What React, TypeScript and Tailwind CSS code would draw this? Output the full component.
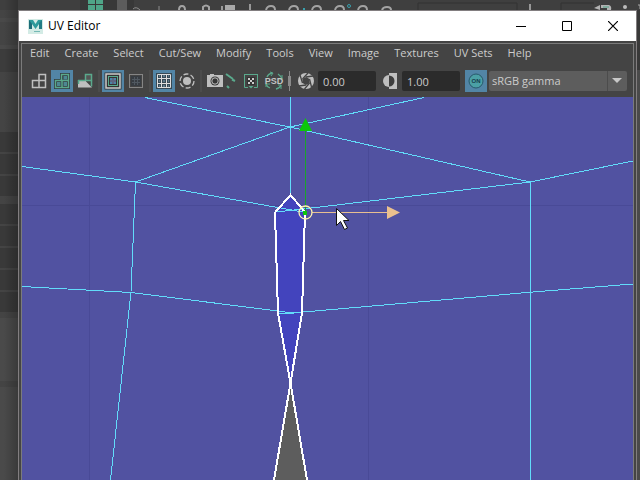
import React from "react";

const MENUS = ["Edit", "Create", "Select", "Cut/Sew", "Modify", "Tools", "View", "Image", "Textures", "UV Sets", "Help"];

const GREEN = "#5aa98c";
const GREY = "#bfbfbf";

function Tool({ label, active = false, wide = false, children }: { label: string; active?: boolean; wide?: boolean; children: React.ReactNode }) {
  return (
    <button
      type="button"
      aria-label={label}
      aria-pressed={active}
      className={`flex h-[22px] shrink-0 items-center justify-center ${wide ? "w-[35px]" : "w-[22px]"} ${active ? "bg-[#5285a6]" : ""}`}
    >
      <svg width={wide ? 35 : 22} height="22" viewBox={wide ? "0 0 35 22" : "0 0 22 22"} fill="none">
        {children}
      </svg>
    </button>
  );
}

function Separator() {
  return <span className="mx-px h-[22px] w-[2px] shrink-0 bg-[#4c4c4c]" />;
}

function MayaLogo() {
  return (
    <svg width="15" height="15" viewBox="0 0 15 15" className="shrink-0">
      <rect width="15" height="15" fill="#d3ebe5" />
      <path d="M1 1h4l2.500 4L10 1h4v9h-3V5L7.500 10 4 5v5H1z" fill="#2d9a9b" />
      <path d="M1 1l3 4v5H1z" fill="#1c6c78" />
      <path d="M11 4l3-3v9h-3z" fill="#237c86" />
      <path d="M6 12.500h6" stroke="#75b9b5" />
    </svg>
  );
}

function Backdrop() {
  return (
    <div className="absolute inset-0">
      <svg className="h-full w-full" viewBox="0 0 640 480" preserveAspectRatio="xMinYMin slice">
        <defs>
          <linearGradient id="edge" x1="0" x2="1">
            <stop offset="0" stopColor="#000" stopOpacity="0" />
            <stop offset="1" stopColor="#000" stopOpacity=".22" />
          </linearGradient>
        </defs>
        <rect width="640" height="480" fill="#444" />
        <rect y="0" width="640" height="10" fill="#3f3f3f" />
        <rect y="18" width="18" height="4" fill="#494949" />
        <rect y="45" width="18" height="4" fill="#494949" />
        <rect y="49" width="18" height="23" fill="#3c3c3c" />
        <rect y="132" width="18" height="64" fill="#393939" />
        <rect y="204" width="18" height="108" fill="#393939" />
        <path d="M0 153h18M0 175h18M0 225h18M0 247h18M0 269h18M0 291h18" stroke="#444" strokeWidth="2" />
        <rect y="318" width="18" height="63" fill="#4a4a4a" />
        <rect y="387" width="18" height="93" fill="#4a4a4a" />
        <rect x="4" width="14" height="480" fill="url(#edge)" />
        <rect x="637" y="10" width="3" height="60" fill="#393939" />
        <rect x="637" y="70" width="3" height="410" fill="#4a4a4a" />
        <rect x="80" width="54" height="10" fill="#383838" />
        <path d="M88 0h7v4h-7zM96 0h7v4h-7zM88 5h7v5h-7zM96 5h7v5h-7z" fill="#4fa588" />
        <rect x="117" width="10" height="10" fill="#5c5c5c" />
        <path d="M133 9q3-3 7 1M159 6v4" stroke="#8d8d8d" fill="none" />
        <path d="M179 10q0-4 3-4t3 4M203 10V7q3-3 6 0v3M266 10q1-4 5-4t4 4M289 10q1-4 5-4t4 4M312 10q1-4 5-4t4 4M335 10q1-4 5-4t4 4M358 10q1-4 5-4t4 4M382 10q1-3 5-3t4 3" stroke="#a3a3a3" strokeWidth="2" fill="none" />
        <path d="M225 5h10v5h-10z" fill="#a9a9a9" />
        <path d="M221 7h2M221 9h2M250 4v6M530 4v6" stroke="#999" strokeWidth="2" />
        <circle cx="349" cy="6" r="1.500" stroke="#38a0ad" fill="none" />
        <path d="M303 8h2v2h-2z" fill="#38a0ad" />
        <path d="M418 10V3h99v7M561 10V3h33" stroke="#333" fill="none" />
        <path d="M594 8l6-3v5zM601 5h8q3 1 2 5h-4V8h-6z" fill="#b3b3b3" />
        <path d="M603 7h6" stroke="#4fa588" />
        <circle cx="625" cy="7" r="2" fill="#bbb" />
        <path d="M638 5h2v4" stroke="#aaa" fill="none" />
      </svg>
    </div>
  );
}

function TitleBar() {
  return (
    <header className="flex h-[30px] shrink-0 items-center bg-white pl-[9px] text-black">
      <MayaLogo />
      <h1 className="ml-[5px] flex-1 text-[12px] leading-4">UV Editor</h1>
      <button type="button" aria-label="Minimize" className="flex h-[30px] w-[46px] items-center justify-center">
        <svg width="10" height="10" viewBox="0 0 10 10" stroke="#000" shapeRendering="crispEdges"><path d="M0 5.500h10" /></svg>
      </button>
      <button type="button" aria-label="Maximize" className="flex h-[30px] w-[46px] items-center justify-center">
        <svg width="10" height="10" viewBox="0 0 10 10" fill="none" stroke="#000"><path d="M.5.5h9v9h-9z" /></svg>
      </button>
      <button type="button" aria-label="Close" className="flex h-[30px] w-[46px] items-center justify-center">
        <svg width="10" height="10" viewBox="0 0 10 10" stroke="#000" strokeWidth="1.200"><path d="M0 0l10 10M10 0L0 10" /></svg>
      </button>
    </header>
  );
}

function Toolbar() {
  return (
    <div className="flex h-[35px] shrink-0 items-center gap-px pb-[2px] pl-[6px] pr-[6px] pt-[5px]">
      <Tool label="UV wireframe">
        <path d="M4.500 10.500h13v7h-13zM11 17.500v-13h6.500v6" stroke={GREY} strokeWidth="1.500" />
      </Tool>
      <Tool label="UV shaded" active>
        <path d="M3 9h6V3h10v16H3z" fill="#333b40" />
        <path d="M4.500 10.500h6v-6h7v13h-13zM10.500 10.500h7M11 10.500v7" stroke={GREEN} strokeWidth="1.500" />
        <path d="M6 12h3.500v4H6zM12.500 12H16v4h-3.500zM12.500 6H16v3.500h-3.500z" fill="#4d8892" />
      </Tool>
      <Tool label="UV distortion">
        <path d="M11.500 4.500h6v6h-6z" fill="#555" stroke={GREEN} strokeWidth="1.500" />
        <path d="M4 10.500h7v7H4z" fill={GREY} />
        <path d="M11 10.500l7 7h-7z" fill={GREY} />
        <path d="M17.500 10.500v6M4 10.500h7M4.500 10v4" stroke={GREEN} strokeWidth="1.500" />
      </Tool>
      <Separator />
      <Tool label="Texture borders" active>
        <rect x="2.500" y="2.500" width="17" height="17" fill="#333" />
        <rect x="4" y="4" width="14" height="14" stroke="#ccc" strokeWidth="1.500" />
        <rect x="6.500" y="6.500" width="9" height="9" stroke={GREEN} />
        <path d="M8 8h2v2H8zM12 8h2v2h-2zM8 12h2v2H8zM12 12h2v2h-2z" fill="#4d82a6" />
        <path d="M10 8h2v6h-2zM8 10h6v2H8z" fill="#5d6480" />
      </Tool>
      <Tool label="Shell borders">
        <rect x="4.500" y="4.500" width="13" height="13" stroke="#858585" />
        <rect x="6" y="6" width="10" height="10" fill="#373c42" />
        <path d="M9.500 7v8M12.500 7v8M7 9.500h8M7 12.500h8" stroke="#505860" />
      </Tool>
      <Separator />
      <Tool label="Grid" active>
        <rect x="3" y="3" width="16" height="16" fill="#374954" />
        <path d="M4.500 4.500h13v13h-13zM8.500 4v14M13.500 4v14M4 8.500h14M4 13.500h14" stroke="#ddd" />
        <path d="M6 6h1M10 6h2M15 6h1M6 11h1M10 11h2M15 11h1M6 16h1M10 16h2M15 16h1" stroke="#81a6ba" />
      </Tool>
      <Tool label="Isolate select">
        <circle cx="11" cy="11" r="4" fill={GREY} />
        <circle cx="11" cy="11" r="7" stroke={GREY} strokeWidth="1.300" strokeDasharray="5 2.300" />
      </Tool>
      <Separator />
      <Tool label="UV snapshot" wide>
        <path d="M3 5h3V4h4v1h9v12H3z" fill={GREY} />
        <circle cx="11" cy="11" r="4.500" fill="#363636" />
        <circle cx="11" cy="11" r="3.200" stroke={GREY} />
        <path d="M22 4l7 5" stroke={GREEN} strokeWidth="2" />
        <path d="M28 9.500l3 1.500M23 16l2 2" stroke={GREEN} strokeWidth="2" />
      </Tool>
      <Tool label="Image display">
        <path d="M8 4.500H4.500v13H8M14 4.500h3.500v13H14" stroke={GREEN} />
        <path d="M4 4.500h14" stroke={GREEN} />
        <path d="M8.500 16h5L11 18.500z" fill={GREEN} />
        <rect x="7" y="7" width="8" height="8" fill="#333" />
        <path d="M8 8h2v2H8zM12 8h2v2h-2zM10 10h2v2h-2zM8 12h2v2H8zM12 12h2v2h-2z" fill="#ccc" />
      </Tool>
      <Tool label="PSD network">
        <path d="M4 7q1-3 5-4M15 4q3 2 4 5M3 14q1 3 4 4M13 19q4-1 5-4" stroke={GREEN} strokeWidth="1.300" />
        <path d="M7 2l3 1-2 3M19 5v4h-4M3 17v-3h4M15 15h3v4" stroke={GREEN} />
        <text x="11" y="14" textAnchor="middle" fill="#c3c3c3" fontSize="9" fontWeight="700" fontFamily="Liberation Sans, sans-serif">PSD</text>
      </Tool>
      <svg width="6" height="22" viewBox="0 0 6 22" className="mr-[2px] shrink-0" stroke="#8a8a8a">
        <path d="M3.500 1v20" /><path d="M3.500 6v10" strokeWidth="3" />
      </svg>
      <Tool label="Exposure">
        <circle cx="11" cy="11" r="8" fill={GREY} />
        <path d="M11 7l3.500 2v4L11 15l-3.500-2V9z" fill="#444" />
        <path d="M11 7l7-1M14.500 9l2 8M14.500 13l-5 6M11 15l-7 1M7.500 13L5 5M7.500 9L13 3" stroke="#444" strokeWidth="1.300" />
      </Tool>
      <input type="text" aria-label="Exposure value" defaultValue="0.00" className="h-5 w-[58px] shrink-0 rounded-[2px] bg-[#2b2b2b] px-[5px] text-[11px] text-[#ccc]" />
      <span className="w-px shrink-0" />
      <Tool label="Gamma">
        <rect x="10" y="3" width="8" height="16" fill={GREY} />
        <path d="M10 5a6 6 0 0 0 0 12z" fill={GREY} />
        <path d="M10 5.500a5.500 5.500 0 0 1 0 11z" fill="#3d3d3d" />
      </Tool>
      <input type="text" aria-label="Gamma value" defaultValue="1.00" className="h-5 w-[58px] shrink-0 rounded-[2px] bg-[#2b2b2b] px-[5px] text-[11px] text-[#ccc]" />
      <span className="w-[3px] shrink-0" />
      <Tool label="Color management" active>
        <circle cx="11" cy="11" r="7" fill="#4ba0a5" stroke="#28586b" />
        <text x="11" y="13" textAnchor="middle" fill="#173e4d" fontSize="6" fontWeight="700" fontFamily="Liberation Sans, sans-serif">ON</text>
      </Tool>
      <div className="relative ml-px h-5 min-w-0 flex-1">
        <select aria-label="View transform" className="block h-full w-full appearance-none rounded-[2px] bg-[#5d5d5d] pl-[3px] text-[11px] text-[#ccc]">
          <option>sRGB gamma</option>
        </select>
        <svg width="20" height="20" viewBox="0 0 20 20" className="pointer-events-none absolute right-0 top-0">
          <path d="M.5 0v20" stroke="#4c4c4c" /><path d="M5 7h10l-5 5z" fill="#c8c8c8" />
        </svg>
      </div>
    </div>
  );
}

function UvCanvas() {
  return (
    <main className="min-h-0 flex-1 bg-[#5152a1]">
      <svg className="block h-full w-full" viewBox="22 97 611 383" preserveAspectRatio="xMidYMid slice" fill="none">
        <g shapeRendering="crispEdges">
          <path d="M89.500 97v383M368.500 97v383M22 205.500h611" stroke="#494a97" />
          <path d="M290.500 383L274 480h33z" fill="#5d5d5d" />
          <path d="M290.500 195L305 212l-2 101-12.500 70L278.500 313 275 212z" fill="#4344bd" />
          <g stroke="#62dcfa">
            <path d="M290.500 97v98M145 97.500l145 29.500 240 55 103-21" />
            <path d="M424 97.500L290 127l-154.500 55L22 166.500M135.500 182L275 207l28 5" />
            <path d="M276 212l27-3 227-27M530.500 182v298M135.500 182L131 292l-20.500 188" />
            <path d="M22 286.500l109 6 147 18.500 14 2 241-21 100-8M279 313.500h7l16-1" />
          </g>
          <path d="M274 480l16.500-97L302 313l3-101-14.500-17L275 212.500l3 100.500 12.500 70L307 480" stroke="#fff" strokeWidth="2" />
          <path d="M305.500 131v81" stroke="#19a62a" />
          <path d="M312 212.500h76" stroke="#e8bf91" />
        </g>
        <path d="M305.500 118l6.500 13h-13z" fill="#0cc60c" />
        <path d="M387 206l13 6.500-13 6.500z" fill="#eac08e" />
        <circle cx="305.500" cy="212.500" r="6.500" stroke="#fff3b0" strokeWidth="1.300" />
        <rect x="303" y="211" width="4" height="4" fill="#0cc60c" />
        <path d="M336.500 208.500v17l4-4 4 8 3-1.500-4-7.500h5.500z" fill="#fff" stroke="#111" />
      </svg>
    </main>
  );
}

export default function App() {
  return (
    <div className="relative flex h-screen overflow-hidden bg-[#444] font-['Open_Sans','Noto_Sans',sans-serif]">
      <Backdrop />
      <div className="relative ml-[18px] mr-[3px] mt-[10px] flex min-w-0 flex-1 flex-col border-x border-t border-[#827e80] bg-[#444]">
        <TitleBar />
        <div className="mx-[2px] mt-[2px] flex min-h-0 flex-1 flex-col border-x border-t border-[#7b7b7b]">
          <nav className="flex h-[18px] shrink-0 items-center gap-[15px] pl-[8px] text-[11px] leading-4 text-[#ccc]">
            {MENUS.map((name) => (
              <button key={name} type="button" className="whitespace-nowrap">{name}</button>
            ))}
          </nav>
          <Toolbar />
          <UvCanvas />
        </div>
      </div>
    </div>
  );
}
